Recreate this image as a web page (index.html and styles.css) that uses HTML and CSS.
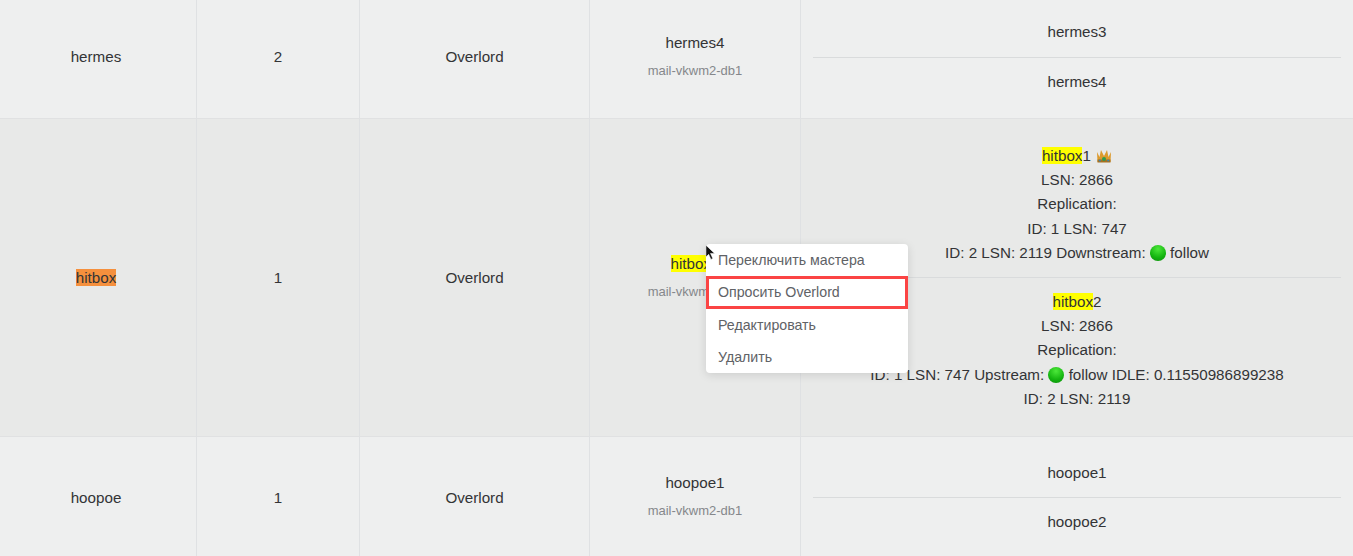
FILE: index.html
```html
<!DOCTYPE html>
<html lang="ru">
<head>
    <meta name="viewport" content="width=device-width, initial-scale=1">
    <title>Shards</title>
    <link rel="stylesheet" href="styles.css">
</head>
<body>

<div class="table">
    <div class="row row-first">
        <div class="cell cell-name">hermes</div>
        <div class="cell">2</div>
        <div class="cell">Overlord</div>
        <div class="cell cell-master">
            <div>hermes4</div>
            <div class="host">mail-vkwm2-db1</div>
        </div>
        <div class="cell cell-nodes">
            <div class="node">hermes3</div>
            <div class="node">hermes4</div>
        </div>
    </div>

    <div class="row row-active">
        <div class="cell cell-name"><span class="mark-orange">hitbox</span></div>
        <div class="cell">1</div>
        <div class="cell">Overlord</div>
        <div class="cell cell-master">
            <div><span class="mark">hitbox</span>1</div>
            <div class="host">mail-vkwm2-db1</div>
        </div>
        <div class="cell cell-nodes">
            <div class="node">
                <div><span class="mark">hitbox</span>1
                    <svg class="crown" viewBox="0 0 16 14" aria-label="crown">
                        <path d="M1 3l2.500 5L5 1l3 6 3-6 1.500 7L15 3l-.5 10h-13z" fill="#dc9a2c"/>
                        <path d="M1.500 10.500h13V13.500h-13z" fill="#a8701f"/>
                        <circle cx="8" cy="10" r="2" fill="#2f9a4e"/>
                        <circle cx="3.800" cy="11.500" r="1.100" fill="#3f86a8"/>
                        <circle cx="12.200" cy="11.500" r="1.100" fill="#3f86a8"/>
                    </svg>
                </div>
                <div>LSN: 2866</div>
                <div>Replication:</div>
                <div>ID: 1 LSN: 747</div>
                <div>ID: 2 LSN: 2119 Downstream: <i class="dot"></i> follow</div>
            </div>
            <div class="node">
                <div><span class="mark">hitbox</span>2</div>
                <div>LSN: 2866</div>
                <div>Replication:</div>
                <div>ID: 1 LSN: 747 Upstream: <i class="dot"></i> follow IDLE: 0.11550986899238</div>
                <div>ID: 2 LSN: 2119</div>
            </div>
        </div>
    </div>

    <div class="row row-last">
        <div class="cell cell-name">hoopoe</div>
        <div class="cell">1</div>
        <div class="cell">Overlord</div>
        <div class="cell cell-master">
            <div>hoopoe1</div>
            <div class="host">mail-vkwm2-db1</div>
        </div>
        <div class="cell cell-nodes">
            <div class="node">hoopoe1</div>
            <div class="node">hoopoe2</div>
        </div>
    </div>
</div>

<ul class="menu">
    <li>Переключить мастера</li>
    <li class="menu-selected">Опросить Overlord</li>
    <li>Редактировать</li>
    <li>Удалить</li>
</ul>

<svg class="cursor" viewBox="0 0 12 18" aria-hidden="true">
    <path d="M1 1v13l3-3 2.500 5.500 2-1L6 10h4.500z" fill="#111" stroke="#fff" stroke-width=".6"/>
</svg>

</body>
</html>
```

FILE: styles.css
```css
html, body {
    height: 100%;
}

body {
    margin: 0;
    overflow: hidden;
    position: relative;
    background-color: #eeefef;
    font-family: "Liberation Sans", Arial, sans-serif;
    font-size: 15.2px;
    color: #333436;
}

.row {
    display: grid;
    grid-template-columns: 197px 163px 230px 211px 1fr;
    border-bottom: 1px solid #e0e1e2;
    box-sizing: border-box;
}

.row-first {
    height: 119px;
}

.row-first .cell {
    padding-bottom: 5px;
}

.row-active {
    height: 318px;
    background-color: #e8e9e8;
}

.row-last {
    height: 120px;
    border-bottom: none;
}

.cell {
    display: flex;
    flex-direction: column;
    justify-content: center;
    align-items: center;
    border-right: 1px solid #dfe1e3;
    text-align: center;
    box-sizing: border-box;
}

.cell-name {
    padding-right: 4px;
}

.cell-master {
    padding-bottom: 2px;
}

.row-first .cell-master {
    padding-bottom: 6px;
}

.cell-nodes {
    align-items: stretch;
    padding: 0 12px;
    border-right: none;
}

.row-first .cell-nodes {
    padding-bottom: 4px;
}

.row-last .cell-nodes {
    padding-top: 1px;
}

.node {
    padding: 12px 0;
    line-height: 24.2px;
    border-bottom: 1px solid #d9dbdc;
}

.node:last-child {
    border-bottom: none;
}

.host {
    margin-top: 12px;
    font-size: 13px;
    color: #85878b;
}

.mark {
    background-color: #ffff00;
}

.mark-orange {
    background-color: #f5903d;
}

.crown {
    width: 16px;
    height: 14px;
    vertical-align: -2px;
    margin-left: 1px;
}

.dot {
    display: inline-block;
    width: 16px;
    height: 16px;
    border-radius: 50%;
    vertical-align: -3px;
    background: radial-gradient(circle at 50% 25%, #4ce83a, #14b40f 60%, #0c8a0c);
}

.menu {
    position: absolute;
    left: 706px;
    top: 244px;
    width: 202px;
    height: 129px;
    margin: 0;
    padding: 0;
    list-style: none;
    background-color: #fff;
    border-radius: 4px;
    box-shadow: 0 2px 10px rgba(0, 0, 0, .12);
    font-size: 14.2px;
    color: #606266;
}

.menu li {
    height: 32.250px;
    line-height: 32.250px;
    padding: 0 12px;
}

.menu-selected {
    box-shadow: inset 0 0 0 3px #fb4444;
}

.cursor {
    position: absolute;
    left: 705px;
    top: 244px;
    width: 11px;
    height: 17px;
}
```
